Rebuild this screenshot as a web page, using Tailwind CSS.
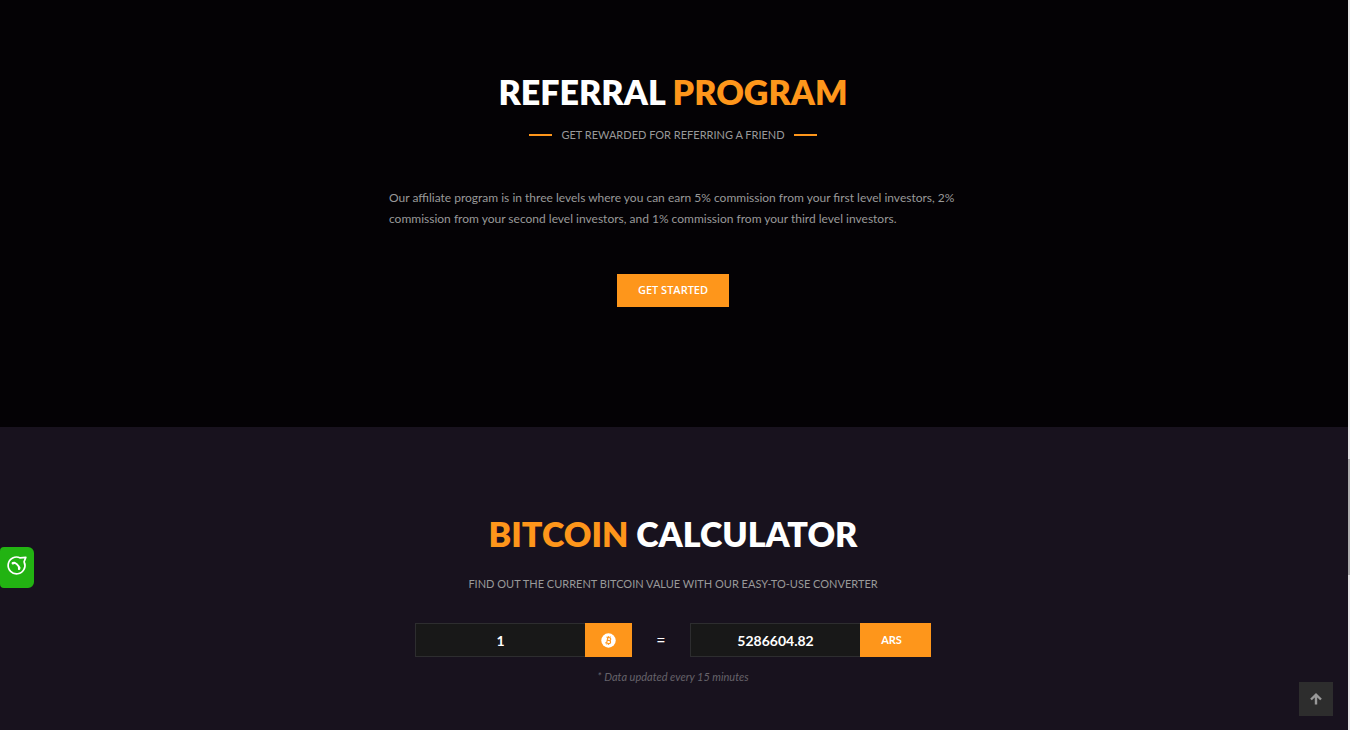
<!DOCTYPE html>
<html lang="en">
<head>
<meta charset="utf-8">
<meta name="viewport" content="width=device-width, initial-scale=1">
<title>Referral Program</title>
<script src="https://cdn.jsdelivr.net/npm/@tailwindcss/browser@4"></script>
</head>
<body class="flex min-h-screen flex-col bg-[#18121e] font-['Lato',sans-serif] text-xs text-[#999]">
<main class="flex grow flex-col pr-1">
  <section class="-mr-1 flex flex-col items-center bg-[#040205] pt-[72px] pr-1 pb-[120px]">
    <h2 class="text-[34px] leading-10 font-extrabold text-white">REFERRAL <span class="text-[#fe961b]">PROGRAM</span></h2>
    <div class="mt-[13px] flex items-center gap-[9px]">
      <span class="h-0.5 w-[23px] bg-[#fe961b]"></span>
      <p class="text-[11px] leading-5">GET REWARDED FOR REFERRING A FRIEND</p>
      <span class="h-0.5 w-[23px] bg-[#fe961b]"></span>
    </div>
    <p class="mt-[42px] w-full max-w-[568px] text-[12px] leading-[21px]">Our affiliate program is in three levels where you can earn 5% commission from your first level investors, 2% commission from your second level investors, and 1% commission from your third level investors.</p>
    <button type="button" class="mt-[45px] h-[33px] w-28 bg-[#fe961b] font-['Open_Sans',sans-serif] text-[11px] font-semibold text-white">GET STARTED</button>
  </section>

  <section class="flex flex-col items-center pt-[87px] pb-10">
    <h2 class="text-[34px] leading-10 font-extrabold text-white"><span class="text-[#fe961b]">BITCOIN</span> CALCULATOR</h2>
    <p class="mt-5 text-[11px] leading-5">FIND OUT THE CURRENT BITCOIN VALUE WITH OUR EASY-TO-USE CONVERTER</p>
    <form class="mt-[29px] flex h-[34px] items-stretch text-white">
      <div class="flex">
        <input type="text" aria-label="Bitcoin amount" value="1" class="w-[170px] border border-r-0 border-[#2d2d2f] bg-[#181818] pt-0.5 text-center text-sm font-bold">
        <span class="flex w-[47px] items-center justify-center bg-[#fe961b]">
          <svg class="size-[15px]" viewBox="0 0 16 16" aria-label="Bitcoin" role="img">
            <circle cx="8" cy="8" r="7.7" fill="#fff"/>
            <g transform="rotate(12 8 8)" fill="none" stroke="#fe961b" stroke-width="1.2">
              <path d="M5.2 4.9h3.300c2.100 0 2.100 3 0 3H6.700h2.100c2.400 0 2.400 3.200 0 3.200H5M6.600 4.900v6.200"/>
              <path d="M7.200 3.300v1.600M8.900 3.300v1.600M7.200 11.100v1.600M8.900 11.100v1.600" stroke-width=".9"/>
            </g>
          </svg>
        </span>
      </div>
      <span class="flex w-[58px] items-center justify-center text-base">=</span>
      <div class="flex">
        <input type="text" aria-label="Converted value" value="5286604.82" class="w-[170px] border border-r-0 border-[#2d2d2f] bg-[#181818] pt-0.5 text-center text-sm font-bold">
        <button type="button" class="w-[71px] bg-[#fe961b] pr-2 text-[11px] font-bold">ARS</button>
      </div>
    </form>
    <p class="mt-2.5 text-[11px] leading-5 text-[#66636a] italic">* Data updated every 15 minutes</p>
  </section>
</main>

<a href="#" aria-label="Contact us" class="fixed top-[547px] left-0 flex h-[41px] w-[34px] items-center justify-center rounded-r-md rounded-l-sm bg-[#22b312]">
  <svg class="-mt-1 mr-0.5 size-[21px]" viewBox="0 0 21 21" fill="none" stroke="#fff">
    <path d="M14.200 2.900A8.400 8.400 0 1 0 18.100 6.800L19.800 2.400Z" stroke-width="1.700" stroke-linejoin="round"/>
    <path d="M6.800 8C9 7.400 12.800 9.500 13.200 13.600" stroke-width="1.800"/>
    <path d="M6.800 8.200l1.600-.3M13.300 12.600l-.2 1.300" stroke-width="2.400" stroke-linecap="round"/>
  </svg>
</a>

<a href="#" aria-label="Back to top" class="fixed right-[17px] bottom-[14px] flex size-[34px] items-center justify-center bg-[#2d2d2d]">
  <svg class="size-3" viewBox="0 0 12 12" fill="none" stroke="#999" stroke-width="2.400"><path d="M6 11.500V2M1 6.500L6 1.700l5 4.800"/></svg>
</a>

<div aria-hidden="true" class="fixed inset-y-0 right-0 w-0.5 bg-[#e6e6e6]"><div class="mt-[459px] h-[116px] bg-[#b0b0b0]"></div></div>
</body>
</html>
